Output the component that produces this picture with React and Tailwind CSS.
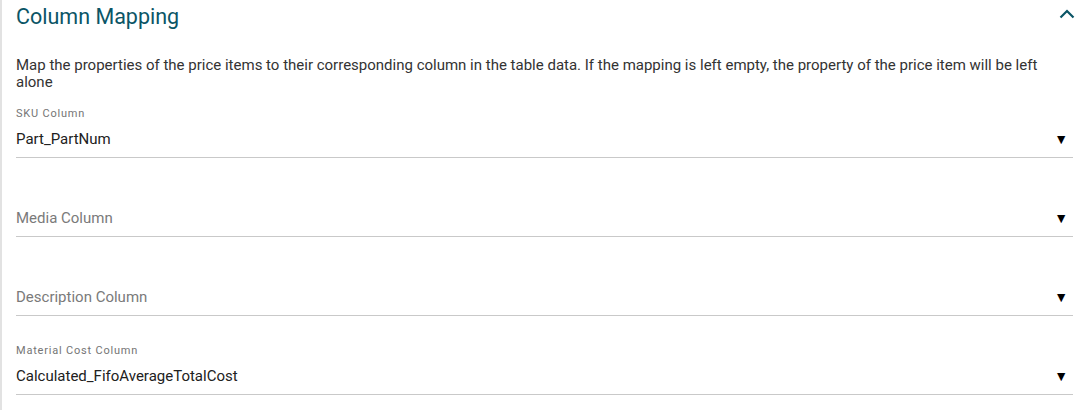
import React from 'react';

const fields = [
    { label: 'SKU Column', value: 'Part_PartNum' },
    { label: 'Media Column', value: '' },
    { label: 'Description Column', value: '' },
    { label: 'Material Cost Column', value: 'Calculated_FifoAverageTotalCost' },
];

const SelectField = ({ label, value }) => {
    const filled = value !== '';
    return (
        <div className="flex flex-col">
            <div className={`h-[14px] mb-[4px] text-[11px] leading-[14px] tracking-[0.8px] text-[#757575] ${filled ? '' : 'invisible'}`}>
                {label}
            </div>
            <div className="flex items-center pt-[4px] pb-[8px] border-b border-[#c9c9c9]">
                <span className={`flex-1 text-[15px] leading-[20px] ${filled ? 'text-[#212121]' : 'text-[#7a7a7a]'}`}>
                    {filled ? value : label}
                </span>
                <span className="text-[14px] leading-[20px] text-black mr-[5px]">▼</span>
            </div>
        </div>
    );
};

const App = () => {
    return (
        <div className="w-[1079px] h-[410px] bg-white border-l-2 border-[#e2e2e2] font-['Roboto',sans-serif] overflow-hidden">
            <div className="flex items-center justify-between pl-[14px] pr-[4px] pt-[1px] h-[34px]">
                <h2 className="text-[21.5px] text-[#0b5566]">Column Mapping</h2>
                <svg width="16" height="10" viewBox="0 0 16 10" className="mb-[7px]">
                    <polyline points="1.5,8.5 8,2 14.5,8.5" fill="none" stroke="#0b5566" strokeWidth="2.2" />
                </svg>
            </div>
            <div className="pl-[14px] pr-[6px] pt-[23px]">
                <p className="text-[15px] leading-[17px] text-[#333]">
                    Map the properties of the price items to their corresponding column in the table data. If the mapping is left empty, the property of the price item will be left alone
                </p>
                <div className="flex flex-col gap-[28px] mt-[16px]">
                    {fields.map((f) => (
                        <SelectField key={f.label} label={f.label} value={f.value} />
                    ))}
                </div>
            </div>
        </div>
    );
};

export default App;
